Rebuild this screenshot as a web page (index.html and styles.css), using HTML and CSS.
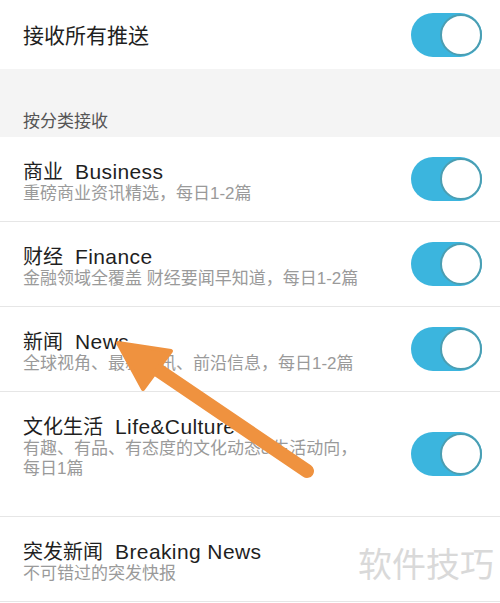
FILE: index.html
```html
<!DOCTYPE html>
<html lang="zh-CN">
<head>
  <meta charset="UTF-8" />
  <meta name="viewport" content="width=device-width, initial-scale=1.0"/>
  <title>推送设置</title>
  <link rel="stylesheet" href="styles.css">
</head>
<body>
  <div class="screen">
    <!-- 总开关 -->
    <div class="master">
      <span class="master-title">接收所有推送</span>
      <span class="switch"></span>
    </div>

    <div class="section-head">按分类接收</div>

    <!-- 分类列表 -->
    <div class="list">
      <div class="item">
        <div class="text">
          <div class="title">商业<span class="en">Business</span></div>
          <div class="desc">重磅商业资讯精选，每日1-2篇</div>
        </div>
        <span class="switch"></span>
      </div>
      <div class="item">
        <div class="text">
          <div class="title">财经<span class="en">Finance</span></div>
          <div class="desc">金融领域全覆盖 财经要闻早知道，每日1-2篇</div>
        </div>
        <span class="switch"></span>
      </div>
      <div class="item">
        <div class="text">
          <div class="title">新闻<span class="en">News</span></div>
          <div class="desc">全球视角、最新资讯、前沿信息，每日1-2篇</div>
        </div>
        <span class="switch"></span>
      </div>
      <div class="item item-tall">
        <div class="text">
          <div class="title">文化生活<span class="en">Life&amp;Culture</span></div>
          <div class="desc">有趣、有品、有态度的文化动态&amp;生活动向，每日1篇</div>
        </div>
        <span class="switch"></span>
      </div>
      <div class="item">
        <div class="text">
          <div class="title">突发新闻<span class="en">Breaking News</span></div>
          <div class="desc">不可错过的突发快报</div>
        </div>
      </div>
    </div>

    <div class="watermark">软件技巧</div>

    <svg class="arrow" width="500" height="603" viewBox="0 0 500 603">
      <line x1="307" y1="471" x2="152" y2="366" stroke="#ef923f" stroke-width="14" stroke-linecap="round"/>
      <polygon points="118,343 143,389 171,351" fill="#ef923f" stroke="#ef923f" stroke-width="4" stroke-linejoin="round"/>
    </svg>
  </div>
</body>
</html>
```

FILE: styles.css
```css
body {
  margin: 0;
  padding: 0;
  background: #fff;
  font-family: "Liberation Sans", "Noto Sans CJK SC", sans-serif;
  color: #1f1f1f;
}
.screen {
  position: relative;
  width: 500px;
  height: 603px;
  overflow: hidden;
}
.master {
  display: flex;
  align-items: center;
  justify-content: space-between;
  height: 69px;
  padding: 0 18px 0 23px;
  box-sizing: border-box;
}
.master-title {
  font-size: 21px;
  line-height: 28px;
  padding-top: 2px;
}
.section-head {
  height: 68px;
  box-sizing: border-box;
  background: #f4f4f4;
  display: flex;
  align-items: flex-end;
  padding: 0 23px 3px;
  font-size: 17px;
  line-height: 24px;
  color: #555;
}
.item {
  display: flex;
  justify-content: space-between;
  align-items: center;
  height: 85px;
  box-sizing: border-box;
  padding: 0 18px 0 23px;
  border-bottom: 1px solid #e6e6e6;
}
.item-tall {
  height: 125px;
}
.text {
  align-self: flex-start;
  padding-top: 23px;
  width: 345px;
}
.title {
  font-size: 20px;
  line-height: 24px;
  white-space: nowrap;
}
.en {
  margin-left: 12px;
  font-size: 21px;
  letter-spacing: 0.4px;
}
.desc {
  font-size: 17px;
  line-height: 20px;
  color: #9a9a9a;
}
.switch {
  position: relative;
  flex: none;
  width: 71px;
  height: 44px;
  border-radius: 22px;
  background: #3bb5de;
}
.switch::after {
  content: "";
  position: absolute;
  right: 0;
  top: 1px;
  width: 42px;
  height: 42px;
  box-sizing: border-box;
  border-radius: 50%;
  background: #fff;
  border: 2px solid #4b9eb2;
}
.watermark {
  position: absolute;
  right: 6px;
  top: 543px;
  font-size: 34px;
  line-height: 44px;
  color: #d9d9d9;
}
.arrow {
  position: absolute;
  left: 0;
  top: 0;
  pointer-events: none;
}
```
